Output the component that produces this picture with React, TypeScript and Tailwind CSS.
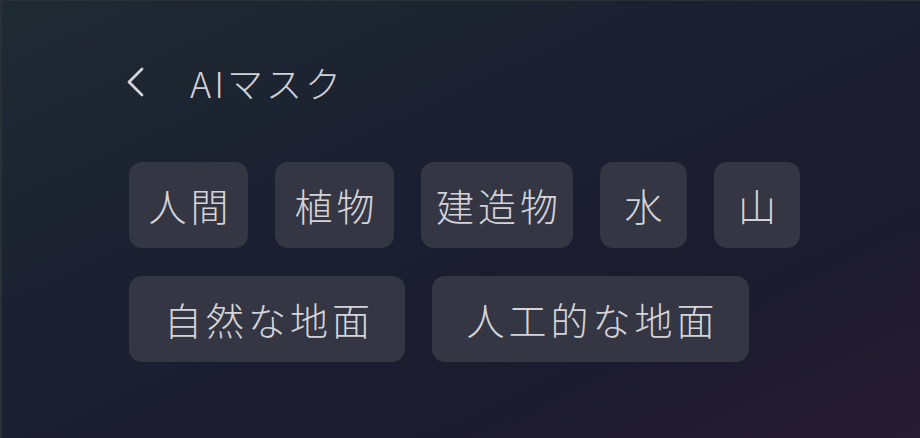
import React from "react";

const row1 = [
  { t: "人間", w: "w-[119px]" },
  { t: "植物", w: "w-[119px]" },
  { t: "建造物", w: "w-[152px]" },
  { t: "水", w: "w-[87px]" },
  { t: "山", w: "w-[86px]" },
];
const row2 = [
  { t: "自然な地面", w: "w-[276px]" },
  { t: "人工的な地面", w: "w-[317px]" },
];

function Chip({ t, w }: { t: string; w: string }) {
  return (
    <div
      className={`${w} h-[86px] rounded-[13px] bg-[#343643] flex items-center justify-center text-[38px] leading-none font-light tracking-[4px] text-[#d4d4d8]`}
    >
      <span className="mr-[-4px]">{t}</span>
    </div>
  );
}

export default function App() {
  return (
    <div
      className="w-[920px] h-[438px] overflow-hidden border-l-2 border-t border-[#2a3136] bg-[linear-gradient(155deg,#1f2a33_0%,#1b2030_40%,#1c1b2d_75%,#281b34_100%)] pl-[123px] pt-[60px]"
      style={{ fontFamily: '"Noto Sans CJK JP", "Noto Sans", sans-serif' }}
    >
      <div className="flex items-center h-[42px]">
        <svg width="20" height="32" viewBox="0 0 20 32" className="mr-[45px]">
          <path
            d="M17 3 L4 16 L17 29"
            fill="none"
            stroke="#d4d4d8"
            strokeWidth="2.8"
            strokeLinecap="round"
            strokeLinejoin="round"
          />
        </svg>
        <span className="text-[36px] leading-none font-light tracking-[3px] text-[#d2d2d6]">AIマスク</span>
      </div>
      <div className="mt-[59px] ml-[4px] flex flex-col gap-[28px]">
        <div className="flex gap-[27px]">
          {row1.map((c) => (
            <Chip key={c.t} {...c} />
          ))}
        </div>
        <div className="flex gap-[27px]">
          {row2.map((c) => (
            <Chip key={c.t} {...c} />
          ))}
        </div>
      </div>
    </div>
  );
}
